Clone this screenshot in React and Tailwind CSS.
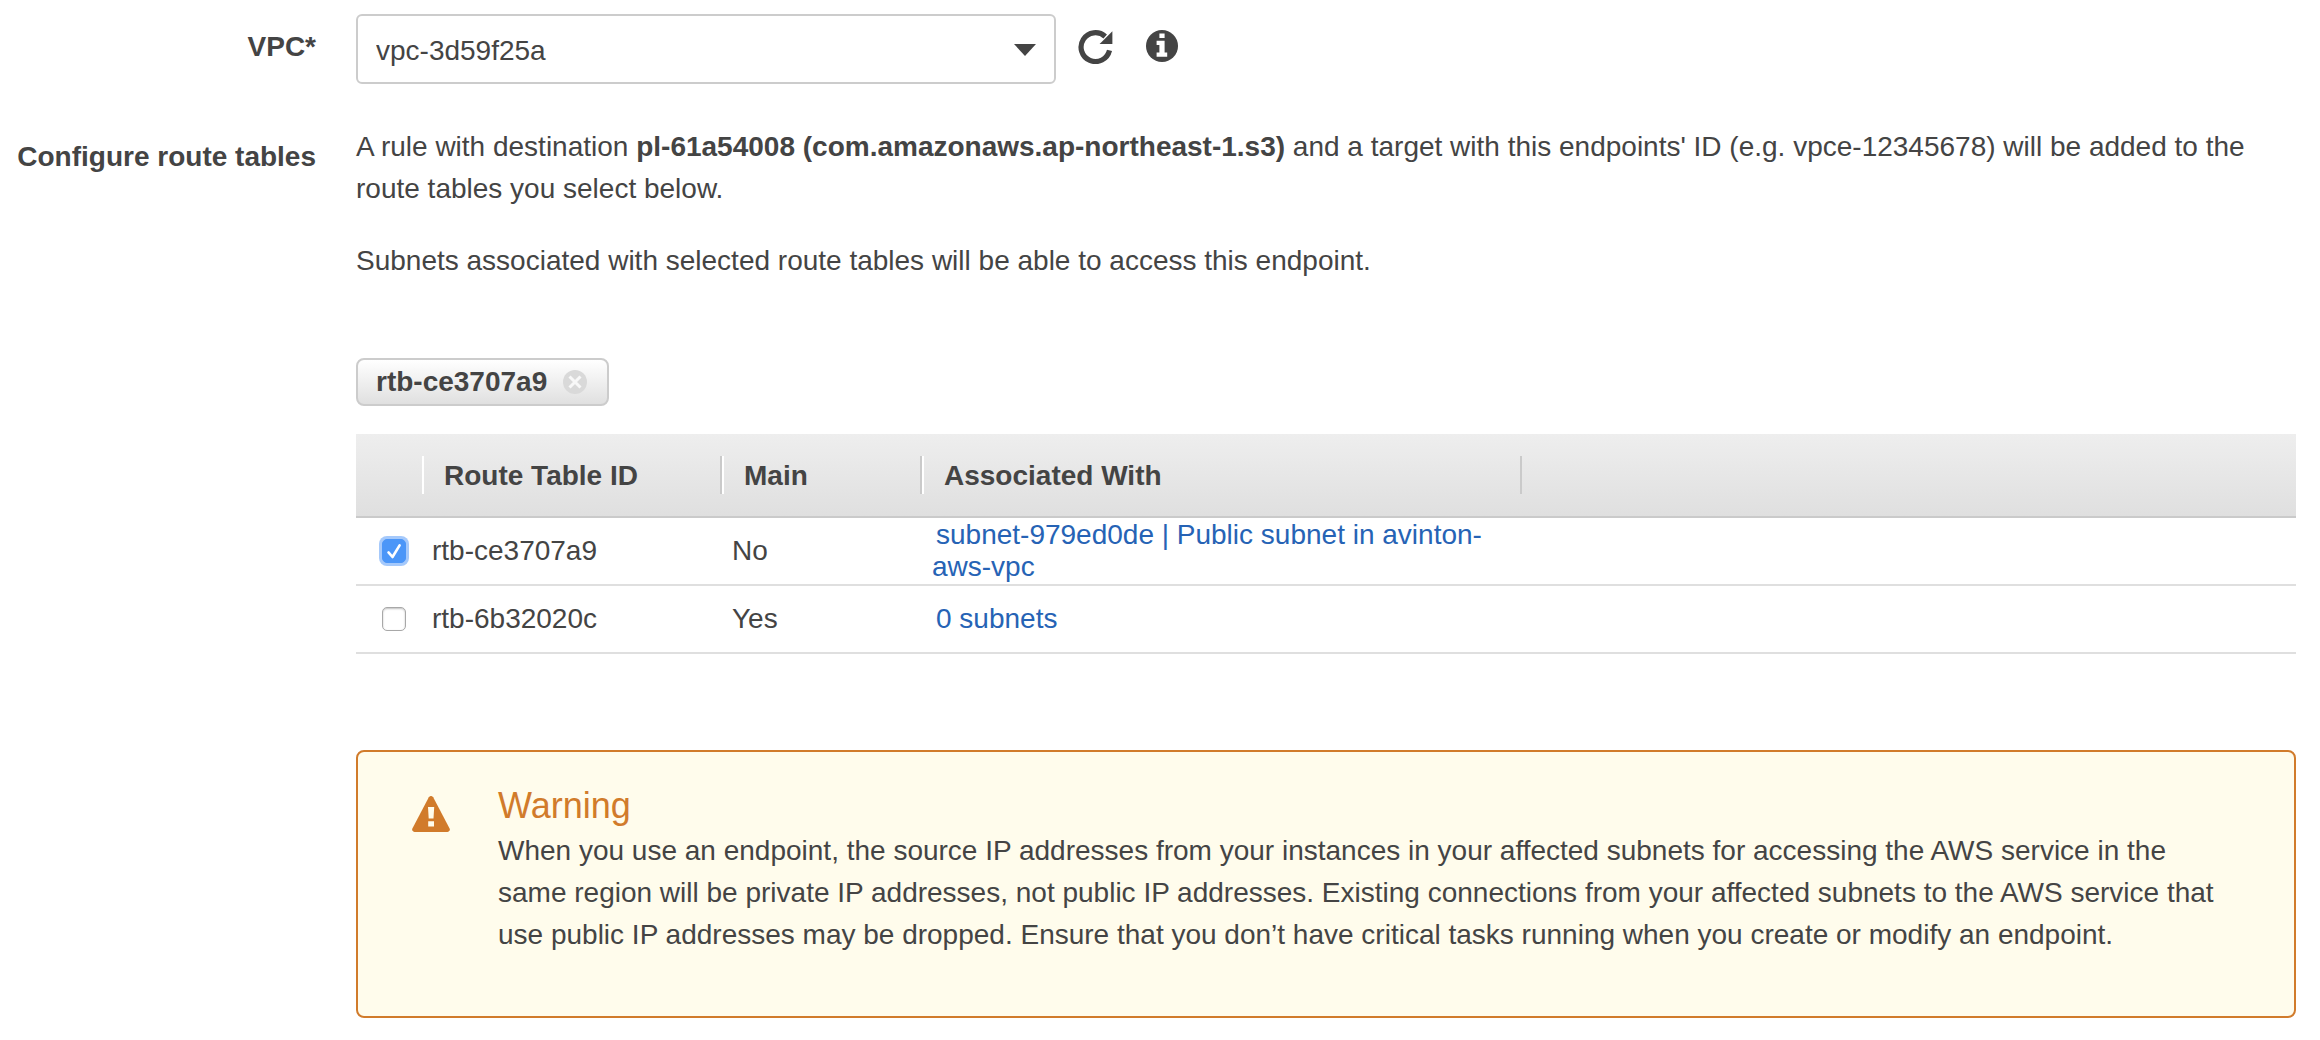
import { useState } from "react";

const VPCS = ["vpc-3d59f25a"];

const ROUTE_TABLES = [
  {
    id: "rtb-ce3707a9",
    main: "No",
    associated: "subnet-979ed0de | Public subnet in avinton-aws-vpc",
  },
  { id: "rtb-6b32020c", main: "Yes", associated: "0 subnets" },
];

function CaretIcon() {
  return (
    <svg
      viewBox="0 0 22 12"
      className="pointer-events-none absolute right-5 top-[30px] h-3 w-[22px]"
      aria-hidden="true"
    >
      <path d="M0 0h22L11 12z" fill="#444444" />
    </svg>
  );
}

function RefreshIcon() {
  return (
    <svg viewBox="0 0 36 34" className="h-[34px] w-9" aria-hidden="true">
      <path
        d="M31.5 20.4A14.4 14.4 0 1 1 27.2 6.5"
        fill="none"
        stroke="#444444"
        strokeWidth="5.2"
      />
      <path d="M34.4 1.2V14H21.6z" fill="#444444" />
    </svg>
  );
}

function InfoIcon() {
  return (
    <svg viewBox="0 0 32 32" className="h-8 w-8" aria-hidden="true">
      <circle cx="16" cy="16" r="16" fill="#444444" />
      <path
        d="M13.4 3.4h5.2v4.6h-5.2zM10.6 10.8h8v11.8h2.6v4.2H10.6v-4.2h2.8v-7.6h-2.8z"
        fill="#ffffff"
      />
    </svg>
  );
}

function RemoveIcon() {
  return (
    <svg viewBox="0 0 24 24" className="h-6 w-6" aria-hidden="true">
      <circle cx="12" cy="12" r="12" fill="#d9d9d9" />
      <path d="M6.5 6.5l11 11M17.5 6.5l-11 11" stroke="#f8f8f8" strokeWidth="3" />
    </svg>
  );
}

function WarningIcon() {
  return (
    <svg viewBox="0 0 38 36" className="mt-3 h-9 w-[38px] shrink-0" aria-hidden="true">
      <path
        d="M16.8 1.3a2.5 2.5 0 0 1 4.4 0l16.4 31.2a2.4 2.4 0 0 1-2.1 3.5h-33a2.4 2.4 0 0 1-2.1-3.5z"
        fill="#d17b2b"
      />
      <path d="M16 11h6.2l-.7 11.6h-4.8zM16.2 25.2h5.8v5.4h-5.8z" fill="#fffcec" />
    </svg>
  );
}

function RowCheckbox({ label, checked, onChange }) {
  return (
    <span className="relative block h-6 w-6">
      <input
        type="checkbox"
        aria-label={label}
        checked={checked}
        onChange={onChange}
        className="block h-6 w-6 appearance-none rounded-[5px] border border-[#a8a8a8] bg-white shadow-[inset_0_1px_2px_rgba(0,0,0,0.25)] checked:border-[#4b96f8] checked:bg-[#4b96f8] checked:shadow-[0_0_0_3px_#a5c9fb]"
      />
      {checked && (
        <svg
          viewBox="0 0 24 24"
          className="pointer-events-none absolute inset-0 h-6 w-6"
          aria-hidden="true"
        >
          <path
            d="M6.5 13.4l4 4.6L17.6 6.4"
            fill="none"
            stroke="#ffffff"
            strokeWidth="2.6"
            strokeLinecap="round"
            strokeLinejoin="round"
          />
        </svg>
      )}
    </span>
  );
}

function HeaderCell({ children }) {
  return (
    <th scope="col" className="border-b-2 border-[#cacaca] p-0 text-left font-bold">
      <div className="flex h-[38px] items-center border-l-2 border-r-2 border-l-white border-r-[#cacaca] pl-5 pt-[2px]">
        {children}
      </div>
    </th>
  );
}

export default function App() {
  const [vpc, setVpc] = useState(VPCS[0]);
  const [selected, setSelected] = useState(["rtb-ce3707a9"]);

  const toggle = (id) =>
    setSelected((prev) =>
      prev.includes(id) ? prev.filter((x) => x !== id) : [...prev, id]
    );

  return (
    <main className="min-h-screen bg-white pb-5 pr-6 pt-[14px] font-['Liberation_Sans',Arial,sans-serif] text-[28px] leading-[42px] text-[#444444]">
      <div className="grid grid-cols-[316px_minmax(0,1fr)] gap-x-10">
        <label htmlFor="vpc" className="pt-3 text-right font-bold">
          VPC*
        </label>
        <div className="flex items-start">
          <div className="relative w-[700px]">
            <select
              id="vpc"
              value={vpc}
              onChange={(e) => setVpc(e.target.value)}
              className="block h-[70px] w-full appearance-none rounded-md border-2 border-[#cccccc] bg-white pl-[18px] pr-14 pt-1"
            >
              {VPCS.map((id) => (
                <option key={id}>{id}</option>
              ))}
            </select>
            <CaretIcon />
          </div>
          <button type="button" aria-label="Refresh" className="ml-[22px] mt-4">
            <RefreshIcon />
          </button>
          <button type="button" aria-label="Info" className="ml-8 mt-4">
            <InfoIcon />
          </button>
        </div>
      </div>

      <div className="mt-[42px] grid grid-cols-[316px_minmax(0,1fr)] gap-x-10">
        <div className="pt-[10px] text-right font-bold">Configure route tables</div>
        <div>
          <p>
            A rule with destination{" "}
            <strong>pl-61a54008 (com.amazonaws.ap-northeast-1.s3)</strong> and a target
            with this endpoints' ID (e.g. vpce-12345678) will be added to the route tables
            you select below.
          </p>
          <p className="mt-[30px]">
            Subnets associated with selected route tables will be able to access this
            endpoint.
          </p>

          <div className="mt-[76px] flex min-h-12 flex-wrap gap-3">
            {selected.map((id) => (
              <span
                key={id}
                className="flex h-12 items-center gap-4 rounded-lg border-2 border-[#cccccc] bg-linear-to-b from-white to-[#e0e0e0] pl-[18px] pr-5 font-bold"
              >
                {id}
                <button type="button" aria-label={`Remove ${id}`} onClick={() => toggle(id)}>
                  <RemoveIcon />
                </button>
              </span>
            ))}
          </div>

          <table className="mt-7 w-full table-fixed border-separate border-spacing-0">
            <colgroup>
              <col className="w-[66px]" />
              <col className="w-[300px]" />
              <col className="w-[200px]" />
              <col className="w-[600px]" />
              <col />
            </colgroup>
            <thead>
              <tr className="h-[84px] bg-linear-to-b from-[#eeeeee] to-[#dfdfdf]">
                <td className="border-b-2 border-[#cacaca]" />
                <HeaderCell>Route Table ID</HeaderCell>
                <HeaderCell>Main</HeaderCell>
                <HeaderCell>Associated With</HeaderCell>
                <td className="border-b-2 border-[#cacaca]" />
              </tr>
            </thead>
            <tbody className="leading-8">
              {ROUTE_TABLES.map((row) => (
                <tr
                  key={row.id}
                  className="h-[68px] [&>td]:border-b-2 [&>td]:border-[#dfdfdf] [&>td]:py-0"
                >
                  <td className="pl-[26px]">
                    <RowCheckbox
                      label={row.id}
                      checked={selected.includes(row.id)}
                      onChange={() => toggle(row.id)}
                    />
                  </td>
                  <td className="pl-[10px]">{row.id}</td>
                  <td className="pl-[10px]">{row.main}</td>
                  <td className="pl-[10px]">
                    <a href="#subnets" className="pl-1 text-[#2663b5]">
                      {row.associated}
                    </a>
                  </td>
                  <td />
                </tr>
              ))}
            </tbody>
          </table>

          <section className="mt-24 flex gap-12 rounded-lg border-2 border-[#d17b2b] bg-[#fffcec] pb-[60px] pl-[54px] pr-16 pt-8">
            <WarningIcon />
            <div>
              <h2 className="pb-[2px] text-[36px] leading-[44px] text-[#d17b2b]">Warning</h2>
              <p>
                When you use an endpoint, the source IP addresses from your instances in
                your affected subnets for accessing the AWS service in the same region will
                be private IP addresses, not public IP addresses. Existing connections from
                your affected subnets to the AWS service that use public IP addresses may be
                dropped. Ensure that you don’t have critical tasks running when you create
                or modify an endpoint.
              </p>
            </div>
          </section>
        </div>
      </div>
    </main>
  );
}
